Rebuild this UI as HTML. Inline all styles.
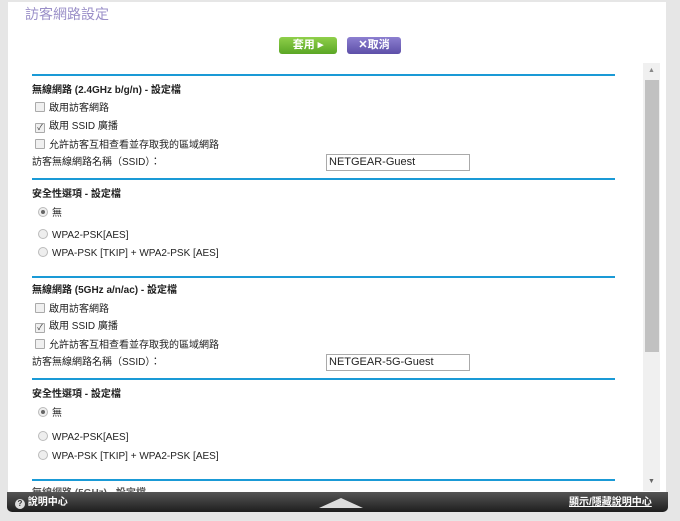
<!DOCTYPE html>
<html><head><meta charset="utf-8"><style>
body{margin:0;width:680px;height:521px;background:#e6e6e6;position:relative;overflow:hidden;font-family:"Liberation Sans","Noto Sans CJK TC",sans-serif;font-size:10px;color:#222}
.p{position:absolute;left:8px;top:2px;width:658px;height:491px;background:#fff}
.a{position:absolute;white-space:nowrap;line-height:12px}
.ln{position:absolute;left:32px;width:583px;height:2px;background:#1a9ad6}
.h{font-weight:bold;font-size:10px}
.cb{display:inline-block;width:8px;height:8px;border:1px solid #aaa;background:#f0f0f0;vertical-align:-1px;margin-right:4px;border-radius:1px;font-size:8px;line-height:8px;text-align:center;color:#333}
.rd{display:inline-block;width:8px;height:8px;border:1px solid #bbb;border-radius:50%;background:#eee;vertical-align:-1px;margin-right:4px;position:relative}
.rd.on:after{content:"";position:absolute;left:2px;top:2px;width:4px;height:4px;border-radius:50%;background:#666}
.in{position:absolute;left:326px;height:17px;border:1px solid #aaa;font-size:11px;line-height:15px;padding-left:2px;box-sizing:border-box;width:144px}
</style></head><body>
<div class="p"></div>
<div class="a" style="left:25px;top:5px;font-size:14px;line-height:18px;color:#9a8fc8">訪客網路設定</div>
<div class="a" style="left:279px;top:37px;width:58px;height:17px;border-radius:3px;background:linear-gradient(#8fcf4a,#5aa625);color:#fff;font-weight:bold;font-size:11px;text-align:center;line-height:17px">套用 ▸</div>
<div class="a" style="left:347px;top:37px;width:54px;height:17px;border-radius:3px;background:linear-gradient(#8c7fd0,#5d4fa8);color:#fff;font-weight:bold;font-size:11px;text-align:center;line-height:17px">✕取消</div>

<div class="ln" style="top:74px"></div>
<div class="a h" style="left:32px;top:85px">無線網路 (2.4GHz b/g/n) - 設定檔</div>
<div class="a" style="left:35px;top:102px"><span class="cb"></span>啟用訪客網路</div>
<div class="a" style="left:35px;top:121px"><span class="cb">✓</span>啟用 SSID 廣播</div>
<div class="a" style="left:35px;top:139px"><span class="cb"></span>允許訪客互相查看並存取我的區域網路</div>
<div class="a" style="left:32px;top:157px">訪客無線網路名稱（SSID）：</div>
<div class="in" style="top:154px">NETGEAR-Guest</div>

<div class="ln" style="top:178px"></div>
<div class="a h" style="left:32px;top:189px">安全性選項 - 設定檔</div>
<div class="a" style="left:38px;top:207px"><span class="rd on"></span>無</div>
<div class="a" style="left:38px;top:229px"><span class="rd"></span>WPA2-PSK[AES]</div>
<div class="a" style="left:38px;top:247px"><span class="rd"></span>WPA-PSK [TKIP] + WPA2-PSK [AES]</div>

<div class="ln" style="top:276px"></div>
<div class="a h" style="left:32px;top:285px">無線網路 (5GHz a/n/ac) - 設定檔</div>
<div class="a" style="left:35px;top:303px"><span class="cb"></span>啟用訪客網路</div>
<div class="a" style="left:35px;top:321px"><span class="cb">✓</span>啟用 SSID 廣播</div>
<div class="a" style="left:35px;top:339px"><span class="cb"></span>允許訪客互相查看並存取我的區域網路</div>
<div class="a" style="left:32px;top:357px">訪客無線網路名稱（SSID）：</div>
<div class="in" style="top:354px">NETGEAR-5G-Guest</div>

<div class="ln" style="top:378px"></div>
<div class="a h" style="left:32px;top:389px">安全性選項 - 設定檔</div>
<div class="a" style="left:38px;top:407px"><span class="rd on"></span>無</div>
<div class="a" style="left:38px;top:431px"><span class="rd"></span>WPA2-PSK[AES]</div>
<div class="a" style="left:38px;top:450px"><span class="rd"></span>WPA-PSK [TKIP] + WPA2-PSK [AES]</div>
<div class="ln" style="top:479px"></div>
<div class="a h" style="left:32px;top:488px;color:#555">無線網路 (5GHz) - 設定檔</div>

<div class="a" style="left:643px;top:63px;width:17px;height:428px;background:#f0f0f0"></div>
<div class="a" style="left:645px;top:80px;width:14px;height:272px;background:#c1c1c1"></div>
<div class="a" style="left:648px;top:65px;font-size:7px;color:#888">▲</div>
<div class="a" style="left:648px;top:476px;font-size:7px;color:#666">▼</div>

<div class="a" style="left:7px;top:492px;width:661px;height:20px;border-radius:0 0 5px 5px;background:linear-gradient(#555,#1e1e1e)"></div>
<div class="a" style="left:15px;top:497px;color:#fff;font-weight:bold"><span style="display:inline-block;width:10px;height:10px;border-radius:50%;background:#ddd;color:#333;font-size:8px;text-align:center;line-height:10px;vertical-align:-1px">?</span> 說明中心</div>
<div class="a" style="left:319px;top:498px;width:0;height:0;border-left:22px solid transparent;border-right:22px solid transparent;border-bottom:10px solid #ddd"></div>
<div class="a" style="left:569px;top:497px;color:#fff;font-weight:bold;text-decoration:underline">顯示/隱藏說明中心</div>
</body></html>
